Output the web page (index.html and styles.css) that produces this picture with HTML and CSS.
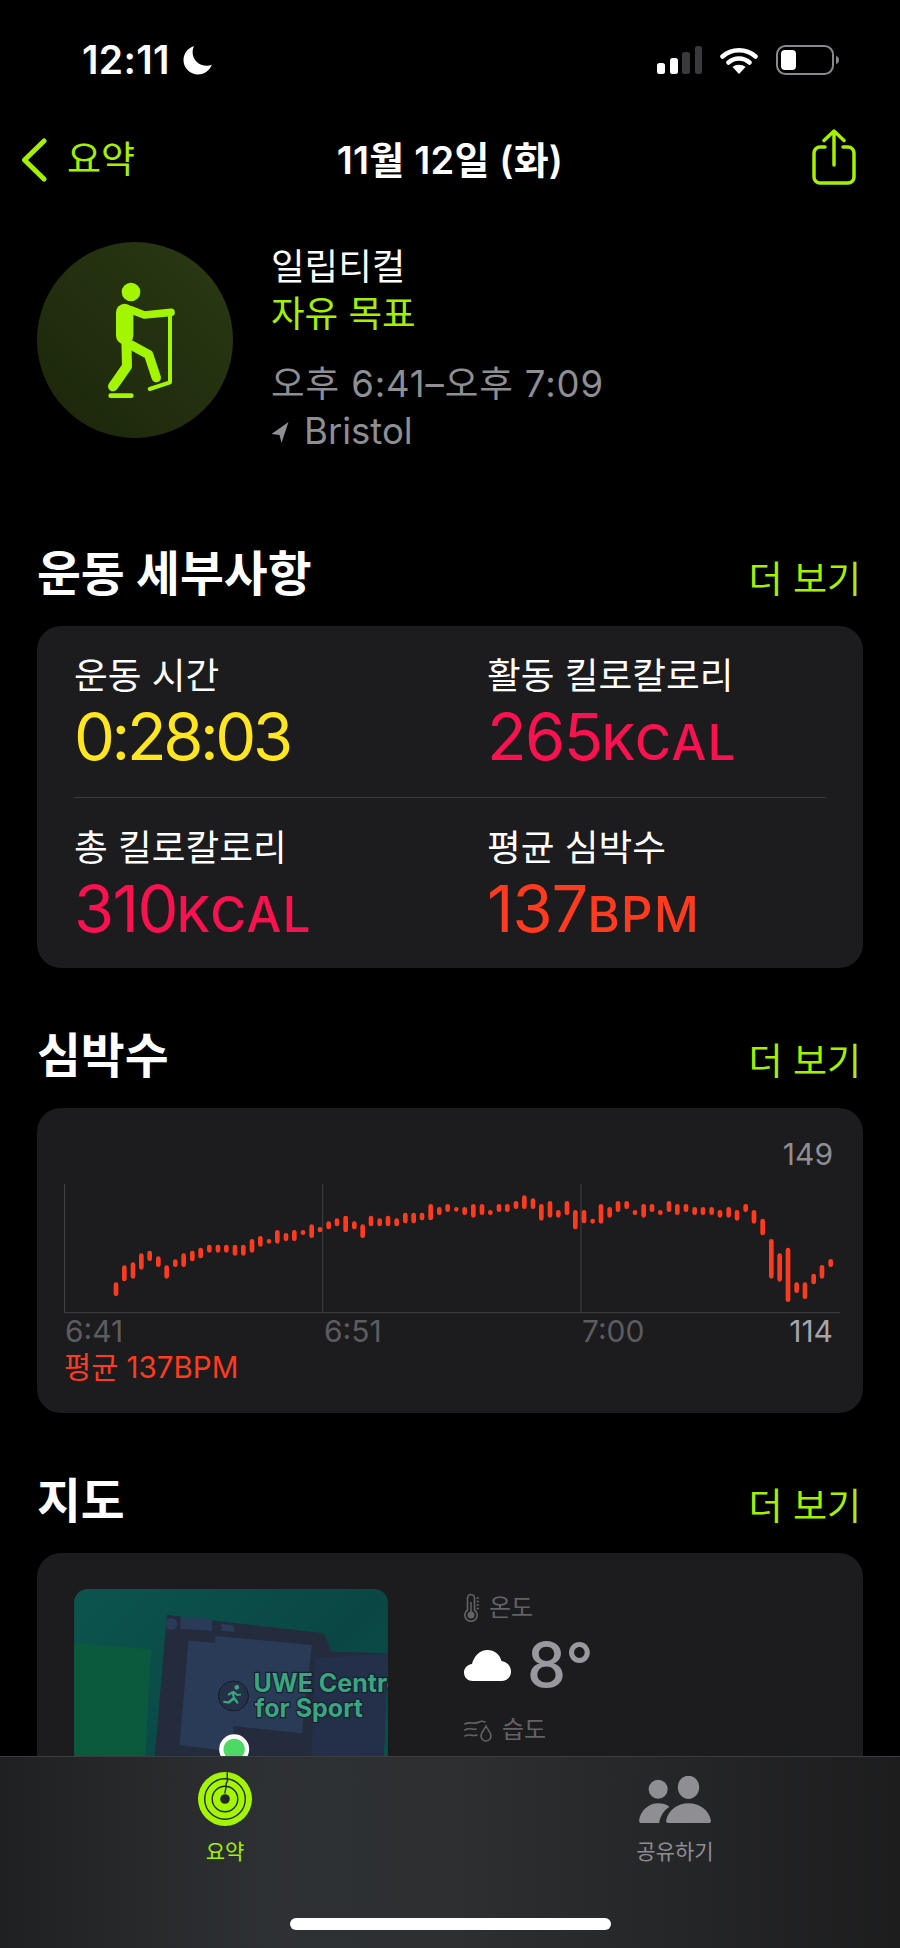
FILE: index.html
```html
<!DOCTYPE html>
<html lang="ko">
<head>
    <meta charset="UTF-8">
    <meta name="viewport" content="width=device-width, initial-scale=1.0">
    <title>운동 요약</title>
    <link rel="stylesheet" href="styles.css">
</head>
<body>
<div class="screen">
    <div class="statusbar">
        <div class="status-left">
            <span class="clock">12:11</span>
            <svg class="moon" viewBox="0 0 30 30"><path d="M11 1C4.800 3 .5 8.600 .5 15c0 8 6.500 14.500 14.500 14.500 6.300 0 11.700-4 13.800-9.700-1.500.6-3.200.9-5 .9C15.700 20.700 9.600 14.600 9.600 7.500 9.600 5.200 10.100 3 11 1z" fill="#fff"/></svg>
        </div>
        <div class="status-right">
            <svg class="signal" viewBox="0 0 45 28">
                <rect x="0" y="17" width="8" height="11" rx="2.500" fill="#fff"/>
                <rect x="13" y="12" width="8" height="16" rx="2.500" fill="#fff"/>
                <rect x="25" y="6" width="8" height="22" rx="2.500" fill="#3a3a3c"/>
                <rect x="38" y="0" width="7" height="28" rx="2.500" fill="#3a3a3c"/>
            </svg>
            <svg class="wifi" viewBox="0 0 38 27">
                <path d="M2.500 9.500C11.500 1.200 26.500 1.200 35.500 9.500M8.500 15.500C14.500 10.200 23.500 10.200 29.500 15.500" fill="none" stroke="#fff" stroke-width="4.500" stroke-linecap="round"/>
                <path d="M19 27l-6.500-7c3.500-3 9.500-3 13 0z" fill="#fff"/>
            </svg>
            <svg class="battery" viewBox="0 0 63 30">
                <rect x="1" y="1" width="56" height="28" rx="8.500" fill="none" stroke="#8a8a8e" stroke-width="2"/>
                <rect x="5" y="5" width="15" height="20" rx="4" fill="#fff"/>
                <path d="M60 11c2 .5 3 2 3 4s-1 3.500-3 4z" fill="#8a8a8e"/>
            </svg>
        </div>
    </div>

    <div class="navbar">
        <a class="back">
            <svg class="chevron" viewBox="0 0 26 44"><path d="M23 3L3.500 22 23 41" fill="none" stroke="#a4f000" stroke-width="5" stroke-linecap="round" stroke-linejoin="round"/></svg>
            <span>요약</span>
        </a>
        <div class="nav-title">11월 12일 (화)</div>
        <svg class="share" viewBox="0 0 44 56">
            <path d="M13 18H8a6 6 0 0 0-6 6v24a6 6 0 0 0 6 6h28a6 6 0 0 0 6-6V24a6 6 0 0 0-6-6h-5M22 36V2.500M12 11.500L22 2l10 9.500" fill="none" stroke="#a4f000" stroke-width="3.500" stroke-linecap="round" stroke-linejoin="round"/>
        </svg>
    </div>

    <div class="hero">
        <svg class="hero-icon" viewBox="50 37 588 588">
            <defs>
                <linearGradient id="heroBg" x1="0" y1="1" x2="1" y2="0">
                    <stop offset="0" stop-color="#1b260a"/>
                    <stop offset="1" stop-color="#2b3914"/>
                </linearGradient>
            </defs>
            <circle cx="344" cy="331" r="294" fill="url(#heroBg)"/>
            <g fill="none" stroke="#a4f500" stroke-linecap="round" stroke-linejoin="round">
                <circle cx="332" cy="187" r="28" fill="#a4f500" stroke="none"/>
                <path d="M313 248V318" stroke-width="52"/>
                <path d="M330 240L372 256 452 248" stroke-width="23"/>
                <path d="M318 330L320 410 278 470" stroke-width="30"/>
                <path d="M330 345L385 375 408 444" stroke-width="28"/>
                <path d="M449 250V458L388 478" stroke-width="12"/>
                <path d="M271 498H333" stroke-width="14"/>
            </g>
        </svg>
        <div class="hero-text">
            <div class="hero-name">일립티컬</div>
            <div class="hero-goal">자유 목표</div>
            <div class="hero-time">오후 6:41–오후 7:09</div>
            <div class="hero-place">
                <svg class="arrow" viewBox="0 0 18 22"><path d="M17 1L0 13l8 1 2 8z" fill="#8e8e93"/></svg>
                <span>Bristol</span>
            </div>
        </div>
    </div>

    <section class="section">
        <div class="section-head">
            <h2>운동 세부사항</h2>
            <a class="more">더 보기</a>
        </div>
        <div class="card stats">
            <div class="stat-row">
                <div class="stat">
                    <div class="stat-label">운동 시간</div>
                    <div class="stat-value duration yellow">0:28:03</div>
                </div>
                <div class="stat">
                    <div class="stat-label">활동 킬로칼로리</div>
                    <div class="stat-value pink">265<span class="unit">KCAL</span></div>
                </div>
            </div>
            <div class="stat-row divided">
                <div class="stat">
                    <div class="stat-label">총 킬로칼로리</div>
                    <div class="stat-value pink">310<span class="unit">KCAL</span></div>
                </div>
                <div class="stat">
                    <div class="stat-label">평균 심박수</div>
                    <div class="stat-value orange">137<span class="unit">BPM</span></div>
                </div>
            </div>
        </div>
    </section>

    <section class="section">
        <div class="section-head">
            <h2>심박수</h2>
            <a class="more">더 보기</a>
        </div>
        <div class="card chart">
            <div class="chart-max">149</div>
            <svg class="plot" viewBox="103 252 2328 390">
                <path d="M104.500 252V638M879 252V638M1654 252V638M103 638H2431" stroke="#414144" stroke-width="3" fill="none"/>
                <path fill="none" stroke="#ff3b1f" stroke-width="14" stroke-linecap="round" d="M259 554V581M284 503V537M310 494V529M335 467V502M360 459V476M386 476V494M411 503V529M437 485V494M462 467V494M488 459V477M513 450V468M539 441V451M565 441V451M590 441V451M616 441V460M641 441V460M667 424V451M692 415V433M718 424V424.100M743 397V424M769 406V416M794 397V416M820 397V398M846 380V407M871 388V390M897 371V381M922 362V372M948 354V390M974 371V381M999 380V407M1024 354V372M1050 362V372M1075 354V372M1101 362V372M1127 345V363M1152 345V363M1177 345V354M1203 319V354M1229 328V338M1254 319V329M1280 328V328.100M1305 328V338M1331 319V346M1357 319V338M1382 337V338M1408 319V329M1433 319V329M1459 310V320M1484 293V320M1510 302V320M1535 319V355M1561 310V346M1586 337V346M1612 310V338M1637 337V381M1663 337V363M1689 363V364M1714 319V364M1740 328V346M1765 310V329M1791 310V320M1816 337V338M1842 319V346M1867 319V329M1892 337V338M1918 310V329M1943 319V338M1969 319V329M1995 328V338M2020 328V338M2046 328V338M2071 337V346M2097 328V346M2122 337V355M2148 319V329M2173 337V364M2199 363V399M2225 424V529M2250 467V538M2275 450V599M2301 554V572M2326 554V590M2352 528V546M2377 502V529M2403 484V494"/>
            </svg>
            <div class="axis">
                <span>6:41</span>
                <span>6:51</span>
                <span>7:00</span>
                <span class="axis-min">114</span>
            </div>
            <div class="chart-avg">평균 137BPM</div>
        </div>
    </section>

    <section class="section">
        <div class="section-head">
            <h2>지도</h2>
            <a class="more">더 보기</a>
        </div>
        <div class="card route">
            <svg class="map" viewBox="222 327 941 1020">
                <defs>
                    <linearGradient id="mapBg" x1="0" y1="0" x2="1" y2="1">
                        <stop offset="0" stop-color="#0c544e"/>
                        <stop offset=".5" stop-color="#0a4744"/>
                        <stop offset="1" stop-color="#0b5a52"/>
                    </linearGradient>
                </defs>
                <rect x="222" y="327" width="941" height="1020" fill="url(#mapBg)"/>
                <path d="M222 488L452 508 410 1347H222z" fill="#0c5a3e"/>
                <path d="M500 405L970 460 995 515 1163 520 1130 1347H420z" fill="#232b3c"/>
                <path d="M945 535L1163 520 1130 1347H915z" fill="#243049"/>
                <path d="M565 482L645 488V468L935 495 905 760 700 738 695 815 538 795z" fill="#2a3b58"/>
                <circle cx="513" cy="432" r="18" fill="#2a3b58"/>
                <path d="M542 410L636 418V452L540 446zM665 432L702 436V456L663 452z" fill="#2a3b58"/>
                <circle cx="700" cy="648" r="45" fill="#253148" stroke="#151b27" stroke-width="3"/>
                <path d="M703 622a7 7 0 1 1 0 .1M696 634l-14 8 3 5 10-5 3 10-14 12-14-2-1 6 18 3 14-11 10 12 5-4-12-17-2-10 9 7 12-2-1-5-10 1-11-10z" fill="#3aa57f"/>
                <text class="map-label" x="760" y="635">UWE Centre</text>
                <text class="map-label" x="764" y="712">for Sport</text>
                <circle cx="702" cy="808" r="45" fill="#fff"/>
                <circle cx="702" cy="808" r="32" fill="#4cd964"/>
            </svg>
            <div class="weather">
                <div class="weather-label">
                    <svg class="thermo" viewBox="0 0 15 28">
                        <path d="M3.500 16V4a3.500 3.500 0 0 1 7 0v12a6.200 6.200 0 1 1-7 0z" fill="none" stroke="#636366" stroke-width="1.600"/>
                        <circle cx="7" cy="21" r="3.500" fill="#636366"/>
                        <path d="M7 8v12M12.500 4h2.500M12.500 7.500h2.500M12.500 11h2.500M12.500 14.500h2.500" stroke="#636366" stroke-width="1.500"/>
                    </svg>
                    <span>온도</span>
                </div>
                <div class="temp">
                    <svg class="cloud" viewBox="0 0 47 31"><path d="M9 31C4 31 0 27.500 0 22.500 0 18 3.500 14.500 8 14 10 6 16 0 23.500 0c7 0 12 4 14 11 5.500 1 9.500 5 9.500 10.500C47 27 43 31 37 31z" fill="#fff"/></svg>
                    <span>8°</span>
                </div>
                <div class="weather-label humid">
                    <svg class="drop" viewBox="0 0 28 24">
                        <path d="M1 6c5-3 9 1 14-2 2-1 4-1 6 0M1 12c4-3 8 0 11-1M1 18c4-3 8 1 12-1" fill="none" stroke="#636366" stroke-width="1.600" stroke-linecap="round"/>
                        <path d="M22 8c2 4 5 7 5 10a5 5 0 0 1-10 0c0-3 3-6 5-10z" fill="none" stroke="#636366" stroke-width="1.600"/>
                    </svg>
                    <span>습도</span>
                </div>
            </div>
        </div>
    </section>

    <div class="tabbar">
        <div class="tab active">
            <svg class="tab-rings" viewBox="0 0 54 54">
                <circle cx="27" cy="27" r="27" fill="#a4f500"/>
                <circle cx="27" cy="27" r="20.300" fill="none" stroke="#23272a" stroke-width="1.400"/>
                <circle cx="27" cy="27" r="12.800" fill="none" stroke="#23272a" stroke-width="1.400"/>
                <circle cx="27" cy="27" r="4.800" fill="#23272a"/>
                <path d="M29 .5c1 2.500-.5 4 .5 6.500s-2 3.500-1.500 6.500-1 4-1 8" fill="none" stroke="#23272a" stroke-width="1.400"/>
            </svg>
            <span>요약</span>
        </div>
        <div class="tab">
            <svg class="tab-people" viewBox="625 648 215 141">
                <circle cx="682" cy="688" r="28.500" fill="#8e8e93"/>
                <ellipse cx="773" cy="682" rx="32" ry="35" fill="#8e8e93"/>
                <path d="M706 781c6-30 34-51 67-51s62 21 67 51c1 5-2 8-7 8H713c-5 0-8-3-7-8z" fill="#8e8e93"/>
                <path d="M625 781c3-28 28-51 57-51 13 0 24 3 34 10-16 10-26 25-30 42-1 4-1 5 0 7h-54c-5 0-8-3-7-8z" fill="#8e8e93"/>
            </svg>
            <span>공유하기</span>
        </div>
        <div class="home-indicator"></div>
    </div>
</div>
</body>
</html>
```

FILE: styles.css
```css
* {
    box-sizing: border-box;
}
html, body {
    margin: 0;
    padding: 0;
    background: #000;
}
body {
    font-family: Inter, "Noto Sans CJK KR", "Noto Sans", sans-serif;
    color: #fff;
}
svg {
    display: block;
    flex: none;
}

.screen {
    position: relative;
    width: 900px;
    height: 1948px;
    overflow: hidden;
    background: #000;
}

/* status bar */
.statusbar {
    height: 120px;
    display: flex;
    justify-content: space-between;
    align-items: center;
    padding: 0 61px 0 82px;
}
.status-left {
    display: flex;
    align-items: center;
    gap: 13px;
}
.clock {
    font-size: 39px;
    line-height: 40px;
    font-weight: 600;
    letter-spacing: .3px;
}
.moon {
    width: 30px;
    height: 30px;
}
.status-right {
    display: flex;
    align-items: center;
}
.signal {
    width: 45px;
    height: 28px;
    margin-right: 18px;
}
.wifi {
    width: 38px;
    height: 27px;
    margin-right: 18px;
}
.battery {
    width: 63px;
    height: 30px;
}

/* nav bar */
.navbar {
    position: relative;
    height: 80px;
    display: flex;
    justify-content: space-between;
    align-items: center;
    padding: 0 44px 0 21px;
}
.back {
    display: flex;
    align-items: center;
    gap: 20px;
    color: #a4f000;
    font-size: 37px;
    line-height: 44px;
}
.chevron {
    width: 26px;
    height: 44px;
}
.nav-title {
    position: absolute;
    left: 0;
    right: 0;
    text-align: center;
    font-size: 38px;
    line-height: 44px;
    font-weight: 600;
    letter-spacing: .2px;
    pointer-events: none;
}
.share {
    width: 44px;
    height: 56px;
    margin-top: -6px;
}

/* workout header */
.hero {
    display: flex;
    margin-top: 42px;
    padding-left: 37px;
    height: 210px;
}
.hero-icon {
    width: 196px;
    height: 196px;
}
.hero-text {
    margin-left: 38px;
    padding-top: 2px;
    font-size: 36.500px;
    line-height: 47px;
}
.hero-goal {
    color: #a4f000;
}
.hero-time {
    margin-top: 23px;
    color: #8e8e93;
    letter-spacing: .9px;
}
.hero-place {
    display: flex;
    align-items: center;
    gap: 14px;
    color: #8e8e93;
}
.arrow {
    width: 19px;
    height: 22px;
}

/* sections */
.section {
    margin-top: 58px;
}
.hero + .section {
    margin-top: 92px;
}
.section-head {
    display: flex;
    justify-content: space-between;
    align-items: center;
    height: 60px;
    margin-bottom: 22px;
    padding: 0 39px 0 37px;
}
.section-head h2 {
    margin: 0;
    font-size: 47.700px;
    line-height: 60px;
    font-weight: 700;
}
.more {
    color: #a4f000;
    font-size: 37px;
    line-height: 46px;
    margin-top: 11px;
}
.card {
    margin: 0 37px;
    background: #1c1c1e;
    border-radius: 24px;
}

/* stats */
.stats {
    padding: 0 37px;
}
.stat-row {
    display: grid;
    grid-template-columns: 413px 1fr;
    height: 171px;
    padding-top: 28px;
}
.divided {
    border-top: 1px solid #3a3a3c;
}
.stat-label {
    font-size: 36.700px;
    line-height: 44px;
}
.stat-value {
    font-size: 65px;
    line-height: 78px;
    letter-spacing: -1.600px;
}
.duration {
    letter-spacing: -3.400px;
}
.unit {
    font-size: 49px;
    font-weight: 500;
    letter-spacing: 1.500px;
}
.yellow {
    color: #ffe620;
}
.pink {
    color: #fa114f;
}
.orange {
    color: #ff3b1f;
    letter-spacing: -1px;
}

/* heart rate chart */
.chart {
    padding: 26px 23px 29px 27px;
}
.chart-max {
    text-align: right;
    padding-right: 7px;
    margin-bottom: 10px;
    color: #8e8e93;
    font-size: 30px;
    line-height: 40px;
}
.plot {
    width: 776px;
    height: 130px;
}
.axis {
    display: grid;
    grid-template-columns: 259px 258px 1fr auto;
    padding: 0 7px 0 1px;
    color: #5c5c60;
    font-size: 30px;
    line-height: 34px;
}
.axis-min {
    color: #a5a5aa;
}
.chart-avg {
    margin-top: 2px;
    color: #ff3b1f;
    font-size: 29.500px;
    line-height: 34px;
}

/* map and weather */
.route {
    display: flex;
    height: 400px;
    padding: 36px 37px 0;
    gap: 76px;
}
.map {
    width: 314px;
    height: 340px;
    border-radius: 14px;
}
.map-label {
    font-family: Inter, sans-serif;
    font-size: 75px;
    font-weight: 700;
    fill: #3aa57f;
    stroke: #142030;
    stroke-width: 7px;
    paint-order: stroke;
}
.weather-label {
    display: flex;
    align-items: center;
    gap: 10px;
    margin-top: 4px;
    color: #636366;
    font-size: 24px;
    line-height: 30px;
}
.thermo {
    width: 15px;
    height: 28px;
}
.drop {
    width: 28px;
    height: 24px;
}
.humid {
    margin-top: 15px;
}
.temp {
    display: flex;
    align-items: center;
    gap: 16px;
    margin-top: 7px;
    color: #98989e;
    font-size: 62px;
    line-height: 70px;
    font-weight: 500;
}
.cloud {
    width: 47px;
    height: 31px;
}

/* tab bar sits over the scrolling content */
.tabbar {
    position: absolute;
    left: 0;
    right: 0;
    bottom: 0;
    height: 192px;
    display: grid;
    grid-template-columns: 450px 450px;
    border-top: 1px solid #3b3d40;
    background: linear-gradient(90deg, #1f2021 0%, #2e3134 30%, #2d2f31 50%, #1d1d1e 100%);
}
.tab {
    display: flex;
    flex-direction: column;
    align-items: center;
    color: #8e8e93;
    font-size: 21px;
    line-height: 30px;
}
.tab-rings {
    width: 54px;
    height: 54px;
    margin-top: 15px;
    margin-bottom: 11px;
}
.active {
    color: #a4f000;
}
.tab-people {
    width: 72px;
    height: 47px;
    margin-top: 19px;
    margin-bottom: 14px;
}
.home-indicator {
    position: absolute;
    left: 290px;
    bottom: 18px;
    width: 321px;
    height: 12px;
    border-radius: 6px;
    background: #fff;
}
```
